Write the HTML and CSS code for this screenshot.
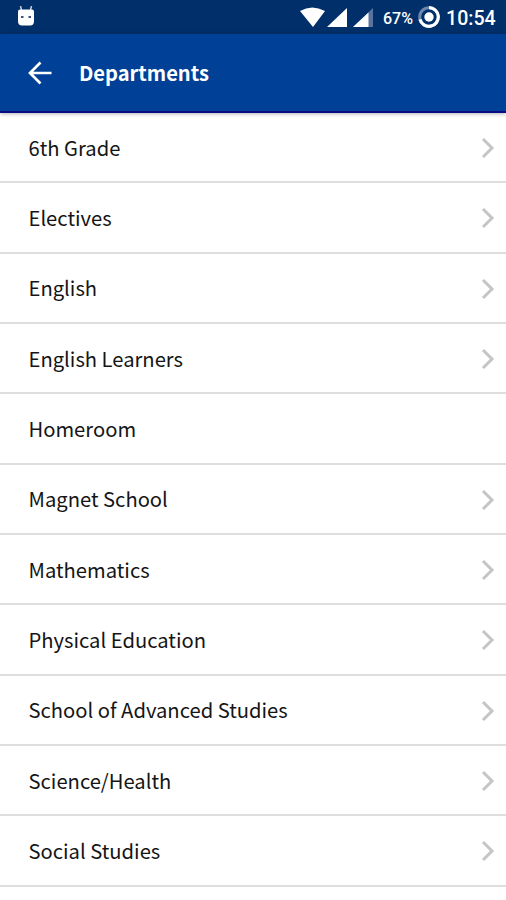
FILE: index.html
```html
<!DOCTYPE html>
<html lang="en">
<head>
<meta charset="utf-8">
<title>Departments</title>
<link rel="stylesheet" href="styles.css">
</head>
<body>
<div class="status">
  <svg class="droid" width="18" height="20" viewBox="0 0 18 20"><path d="M3.500 0 4.500 4M14.500 0 13.500 4" stroke="#c3cfe5" stroke-width="1.500"/><path d="M3 3.500h12q2 0 2 2V15q0 4.500-4 4.500H5Q1 19.500 1 15V5.500q0-2 2-2z" fill="#fff"/><path d="M4 10h2.500v2H4zM11.500 10H14v2h-2.500z" fill="#435080"/></svg>
  <svg class="signals" width="76" height="22" viewBox="0 0 76 22"><path d="M0 5Q12-2 25 5L13 21z" fill="#fff"/><path d="M47 2v19H27z" fill="#fff"/><path d="M73 2v19H53z" fill="#58739f"/><path d="M68.500 6.500V21H53z" fill="#fff"/></svg>
  <span class="percent">67%</span>
  <svg class="battery" width="22" height="22" viewBox="0 0 22 22"><circle cx="11" cy="11" r="9.300" fill="none" stroke="#6d86b1" stroke-width="3"/><path d="M11 1.700A9.300 9.300 0 1 1 2 13.300" fill="none" stroke="#fff" stroke-width="3.200"/><circle cx="11" cy="11" r="4.700" fill="#fff"/></svg>
  <span class="clock">10:54</span>
</div>
<header class="bar">
  <svg class="back" width="24" height="24" viewBox="0 0 24 24"><path d="M23.500 12H2M12.500 1.500 2 12l10.500 10.500" fill="none" stroke="#fff" stroke-width="2.700"/></svg>
  <h1>Departments</h1>
</header>
<ul class="list">
  <li><span>6th Grade</span><svg class="chevron" viewBox="0 0 14 22"><path d="M2 2l9 9-9 9"/></svg></li>
  <li><span>Electives</span><svg class="chevron" viewBox="0 0 14 22"><path d="M2 2l9 9-9 9"/></svg></li>
  <li><span>English</span><svg class="chevron" viewBox="0 0 14 22"><path d="M2 2l9 9-9 9"/></svg></li>
  <li><span>English Learners</span><svg class="chevron" viewBox="0 0 14 22"><path d="M2 2l9 9-9 9"/></svg></li>
  <li><span>Homeroom</span></li>
  <li><span>Magnet School</span><svg class="chevron" viewBox="0 0 14 22"><path d="M2 2l9 9-9 9"/></svg></li>
  <li><span>Mathematics</span><svg class="chevron" viewBox="0 0 14 22"><path d="M2 2l9 9-9 9"/></svg></li>
  <li><span>Physical Education</span><svg class="chevron" viewBox="0 0 14 22"><path d="M2 2l9 9-9 9"/></svg></li>
  <li><span>School of Advanced Studies</span><svg class="chevron" viewBox="0 0 14 22"><path d="M2 2l9 9-9 9"/></svg></li>
  <li><span>Science/Health</span><svg class="chevron" viewBox="0 0 14 22"><path d="M2 2l9 9-9 9"/></svg></li>
  <li><span>Social Studies</span><svg class="chevron" viewBox="0 0 14 22"><path d="M2 2l9 9-9 9"/></svg></li>
</ul>
</body>
</html>
```
FILE: styles.css
```css
* { box-sizing: border-box; }
body {
  margin: 0;
  height: 900px;
  overflow: hidden;
  background: #fff;
  color: #151515;
  font-family: "Noto Sans CJK JP", "Noto Sans", sans-serif;
}
.status {
  display: flex;
  align-items: center;
  height: 34px;
  padding: 0 10px 0 17px;
  background: #002f69;
  color: #fff;
  font-family: Roboto, sans-serif;
}
.droid { margin-top: -2px; }
.signals { margin-left: auto; }
.percent { width: 32px; margin-left: 7px; font-size: 16px; font-weight: 500; white-space: nowrap; margin-top: 2px; }
.battery { margin-left: 3px; }
.clock { width: 50px; margin-left: 6px; font-size: 19.6px; font-weight: 500; margin-top: 2px; }
.bar {
  display: flex;
  align-items: center;
  height: 79px;
  padding-left: 28px;
  background: #004097;
  color: #fff;
  border-bottom: 2px solid #080b83;
  box-shadow: 0 1px 4px rgba(0, 0, 0, .3);
}
.back { margin-top: 1px; }
.bar h1 {
  margin: 0 0 0 27px;
  font-size: 20.1px;
  line-height: 30px;
  font-weight: 700;
}
.list { margin: 0; padding: 0; list-style: none; }
.list li {
  display: flex;
  align-items: center;
  justify-content: space-between;
  height: 70.33px;
  padding: 1px 11px 0 28.5px;
  border-bottom: 2px solid #dedede;
  font-size: 20.2px;
  line-height: 30px;
}
.chevron { width: 14px; height: 22px; margin-top: 1px; fill: none; stroke: #c5c5c5; stroke-width: 3; }
```
